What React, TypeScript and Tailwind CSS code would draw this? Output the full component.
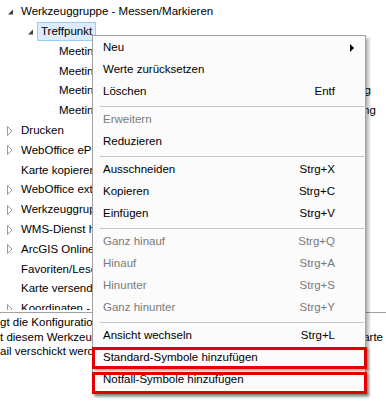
import React from 'react';

type TreeNode = { label: string; level: 0 | 1 | 2; toggle?: 'open' | 'closed'; selected?: boolean };

const tree: TreeNode[] = [
  { label: 'Werkzeuggruppe - Messen/Markieren', level: 0, toggle: 'open' },
  { label: 'Treffpunkt', level: 1, toggle: 'open', selected: true },
  { label: 'Meetingpoint rot', level: 2 },
  { label: 'Meetingpoint grün', level: 2 },
  { label: 'Meetingpoint Sammelplatz für alle Personen zur Evakuierung', level: 2 },
  { label: 'Meetingpoint Treffpunkt für Feuerwehr mit grüner Beschriftung', level: 2 },
  { label: 'Drucken', level: 0, toggle: 'closed' },
  { label: 'WebOffice ePaper', level: 0, toggle: 'closed' },
  { label: 'Karte kopieren', level: 0 },
  { label: 'WebOffice extract', level: 0, toggle: 'closed' },
  { label: 'Werkzeuggruppe - Navigation', level: 0, toggle: 'closed' },
  { label: 'WMS-Dienst hinzufügen', level: 0, toggle: 'closed' },
  { label: 'ArcGIS Online Karte', level: 0, toggle: 'closed' },
  { label: 'Favoriten/Lesezeichen', level: 0 },
  { label: 'Karte versenden', level: 0 },
  { label: 'Koordinaten - Anzeige', level: 0, toggle: 'closed' },
];

type MenuItem = { label: string; shortcut?: string; disabled?: boolean; submenu?: boolean } | 'sep';

const menu: MenuItem[] = [
  { label: 'Neu', submenu: true },
  { label: 'Werte zurücksetzen' },
  { label: 'Löschen', shortcut: 'Entf' },
  'sep',
  { label: 'Erweitern', disabled: true },
  { label: 'Reduzieren' },
  'sep',
  { label: 'Ausschneiden', shortcut: 'Strg+X' },
  { label: 'Kopieren', shortcut: 'Strg+C' },
  { label: 'Einfügen', shortcut: 'Strg+V' },
  'sep',
  { label: 'Ganz hinauf', shortcut: 'Strg+Q', disabled: true },
  { label: 'Hinauf', shortcut: 'Strg+A', disabled: true },
  { label: 'Hinunter', shortcut: 'Strg+S', disabled: true },
  { label: 'Ganz hinunter', shortcut: 'Strg+Y', disabled: true },
  'sep',
  { label: 'Ansicht wechseln', shortcut: 'Strg+L' },
  { label: 'Standard-Symbole hinzufügen' },
  { label: 'Notfall-Symbole hinzufügen' },
];

const levelPad = ['pl-[7px]', 'pl-[27px]', 'pl-[45px]'];

const Toggle = ({ state }: { state?: 'open' | 'closed' }) => {
  if (state === 'open') {
    return (
      <svg width="10" height="8" viewBox="0 0 10 8" className="shrink-0">
        <path d="M6 1.5 L6 6.5 L1 6.5 Z" fill="#3c3c3c" />
      </svg>
    );
  }
  if (state === 'closed') {
    return (
      <svg width="10" height="10" viewBox="0 0 10 10" className="shrink-0">
        <path d="M0.5 0.5 L5 5 L0.5 9.5 Z" fill="none" stroke="#9a9a9a" strokeWidth="1" />
      </svg>
    );
  }
  return <span className="w-[10px] shrink-0" />;
};

const App = () => {
  return (
    <div className="relative w-[386px] h-[402px] overflow-hidden bg-white text-[11.5px] text-black font-['Segoe_UI','Liberation_Sans',Arial,sans-serif]">
      {/* tree */}
      <div className="h-[313px] border-b border-[#a0a0a0]">
        <div className="h-[310px] overflow-hidden pt-[2px]">
          {tree.map((node, i) => (
            <div key={i} className={`h-[19.8px] flex items-center whitespace-nowrap ${levelPad[node.level]}`}>
              <Toggle state={node.toggle} />
              <span
                className={`h-[19px] flex items-center px-[3px] border ${
                  node.selected ? 'bg-[#dcecfc] border-[#99cdf2]' : 'border-transparent'
                }`}
              >
                {node.label}
              </span>
            </div>
          ))}
        </div>
      </div>

      {/* description */}
      <div className="pt-[2px] leading-[14.6px] whitespace-nowrap">
        <div>gt die Konfiguration der Symbole an, die</div>
        <div className="flex w-[383px] justify-between">
          <span className="min-w-0 overflow-hidden">t diesem Werkzeug in der aktuellen</span>
          <span>Karte</span>
        </div>
        <div>ail verschickt werden können.</div>
      </div>

      {/* context menu */}
      <div className="absolute left-[92px] top-[35px] w-[274px] bg-[#fbfbfb] border border-[#a0a0a0] pt-[1px] pb-[2px] shadow-[3px_3px_3px_rgba(0,0,0,0.28)]">
        {menu.map((item, i) =>
          item === 'sep' ? (
            <div key={i} className="h-[6px] flex items-center ml-[7px] mr-[1px]">
              <div className="h-px w-full bg-[#c6c6c6]" />
            </div>
          ) : (
            <div
              key={i}
              className={`h-[22px] flex items-center pl-[10px] whitespace-nowrap ${
                item.disabled ? 'text-[#7a7a7a]' : 'text-black'
              }`}
            >
              <span className="flex-1">{item.label}</span>
              {item.shortcut && <span>{item.shortcut}</span>}
              <span className="w-[30px] flex items-center pl-[15px]">
                {item.submenu && (
                  <svg width="5" height="8" viewBox="0 0 5 8">
                    <path d="M0 0 L4 4 L0 8 Z" fill="#000" />
                  </svg>
                )}
              </span>
            </div>
          )
        )}
      </div>

      {/* red annotation boxes */}
      <div className="absolute left-[92px] top-[347px] w-[275px] h-[22px] border-[3px] border-[#e10000] shadow-[2px_2px_2px_rgba(0,0,0,0.3)]" />
      <div className="absolute left-[92px] top-[372px] w-[275px] h-[22px] border-[3px] border-[#e10000] shadow-[2px_2px_2px_rgba(0,0,0,0.3)]" />
    </div>
  );
};

export default App;
